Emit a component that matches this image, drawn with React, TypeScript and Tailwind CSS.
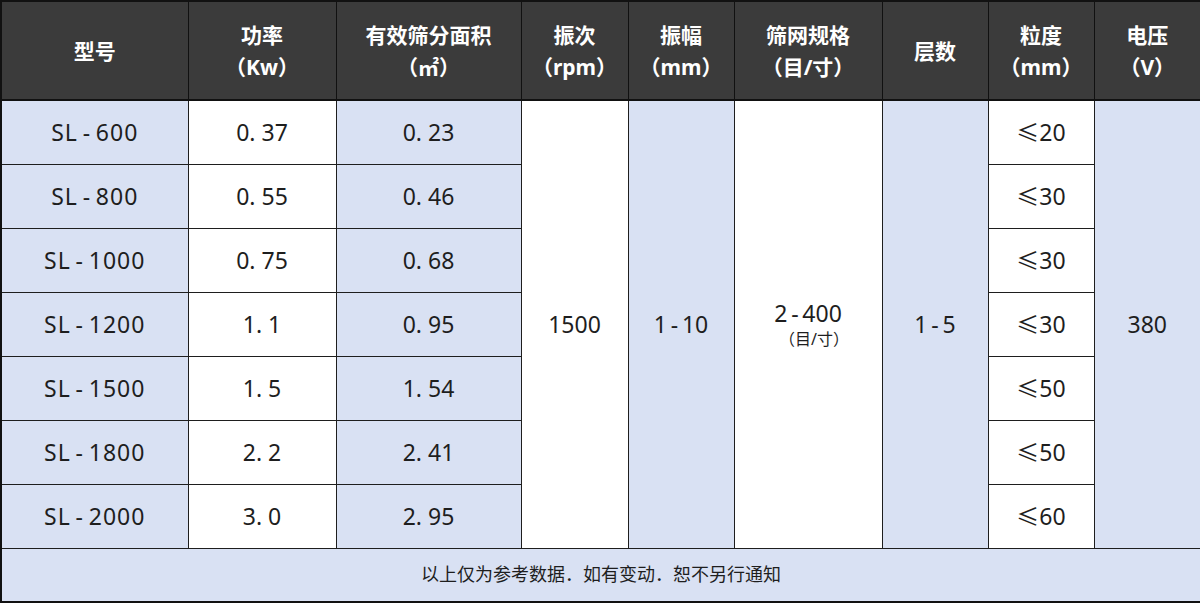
import React from "react";

const rows = [
  { model: "SL\u2009-\u2009600", power: "0. 37", area: "0. 23", size: "≤20" },
  { model: "SL\u2009-\u2009800", power: "0. 55", area: "0. 46", size: "≤30" },
  { model: "SL\u2009-\u20091000", power: "0. 75", area: "0. 68", size: "≤30" },
  { model: "SL\u2009-\u20091200", power: "1. 1", area: "0. 95", size: "≤30" },
  { model: "SL\u2009-\u20091500", power: "1. 5", area: "1. 54", size: "≤50" },
  { model: "SL\u2009-\u20091800", power: "2. 2", area: "2. 41", size: "≤50" },
  { model: "SL\u2009-\u20092000", power: "3. 0", area: "2. 95", size: "≤60" },
];

const headers: [string, string | null][] = [
  ["型号", null],
  ["功率", "（Kw）"],
  ["有效筛分面积", "（㎡）"],
  ["振次", "（rpm）"],
  ["振幅", "（mm）"],
  ["筛网规格", "（目/寸）"],
  ["层数", null],
  ["粒度", "（mm）"],
  ["电压", "（V）"],
];

const widths = [187, 148, 185, 107, 106, 148, 106, 106, 107];

const blue = "bg-[#d9e1f3]";
const cell = "border border-[#1e1e1e] text-center align-middle text-[23px] text-[#1e1e1e]";

export default function App() {
  return (
    <div
      className="w-[1200px] h-[603px] bg-white"
      style={{ fontFamily: '"Noto Sans", "Noto Sans CJK SC", sans-serif' }}
    >
      <table className="w-[1200px] h-[603px] table-fixed border-collapse border-2 border-[#111]">
        <colgroup>
          {widths.map((w, i) => (
            <col key={i} style={{ width: w }} />
          ))}
        </colgroup>
        <thead>
          <tr className="h-[99px] bg-[#3b3b3b]">
            {headers.map(([a, b]) => (
              <th
                key={a}
                className="border border-[#111] border-b-2 text-center align-middle text-white font-bold text-[21px] leading-[32px]"
              >
                <div>{a}</div>
                {b && <div>{b}</div>}
              </th>
            ))}
          </tr>
        </thead>
        <tbody>
          {rows.map((r, i) => (
            <tr key={r.model} className="h-[64px]">
              <td className={`${cell} ${blue} tracking-[1px]`}>{r.model}</td>
              <td className={`${cell} bg-white`}>{r.power}</td>
              <td className={`${cell} ${blue}`}>{r.area}</td>
              {i === 0 && (
                <>
                  <td rowSpan={7} className={`${cell} bg-white`}>1500</td>
                  <td rowSpan={7} className={`${cell} ${blue}`}>1{"\u2009-\u2009"}10</td>
                  <td rowSpan={7} className={`${cell} bg-white`}>
                    <div className="leading-[30px]">2{"\u2009-\u2009"}400</div>
                    <div className="text-[16px] leading-[22px] pl-[12px]">（目/寸）</div>
                  </td>
                  <td rowSpan={7} className={`${cell} ${blue}`}>1{"\u2009-\u2009"}5</td>
                </>
              )}
              <td className={`${cell} bg-white`}>{r.size}</td>
              {i === 0 && (
                <td rowSpan={7} className={`${cell} ${blue}`}>380</td>
              )}
            </tr>
          ))}
          <tr className="h-[54px]">
            <td colSpan={9} className={`border border-[#111] ${blue} text-center align-middle text-[18px] text-[#1e1e1e]`}>
              以上仅为参考数据．如有变动．恕不另行通知
            </td>
          </tr>
        </tbody>
      </table>
    </div>
  );
}
